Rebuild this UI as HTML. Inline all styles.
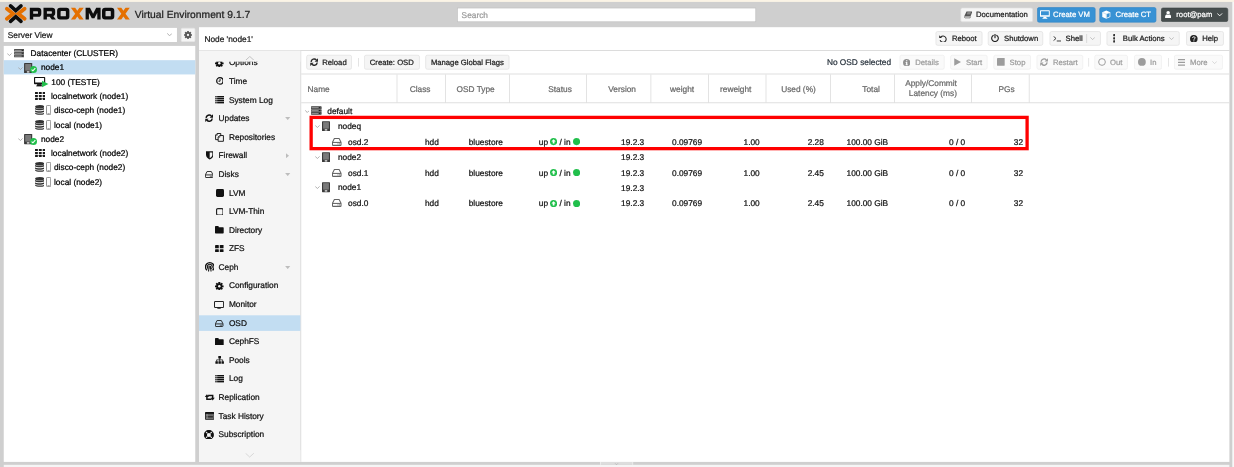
<!DOCTYPE html>
<html><head><meta charset="utf-8"><title>node1 - Proxmox Virtual Environment</title>
<style>
html,body{margin:0;padding:0;}
body{width:1234px;height:467px;overflow:hidden;position:relative;background:#cfcfcf;font-family:"Liberation Sans",sans-serif;}
.a{position:absolute;display:block;}
.t{white-space:nowrap;text-rendering:geometricPrecision;-webkit-text-stroke:0.22px currentColor;}
#root{position:absolute;left:0;top:0;width:1234px;height:467px;will-change:transform;}
</style></head><body><div id="root">
<svg class="a" style="left:0px;top:0px;" width="1234" height="2"><rect x="0.00" y="0.00" width="1234.00" height="1.90" rx="0" fill="#fbf4e6"/></svg>
<svg class="a" style="left:1232px;top:1px;" width="2" height="466"><rect x="0.30" y="0.90" width="1.70" height="465.10" rx="0" fill="#f8f8f8"/></svg>
<svg class="a" style="left:3px;top:464px;" width="1227" height="3"><rect x="0.75" y="0.80" width="1225.60" height="2.20" rx="0" fill="#f5f5f5"/></svg>
<svg class="a" style="left:600px;top:461px;" width="33" height="4"><rect x="0.60" y="0.90" width="32.00" height="2.90" rx="0" fill="#dddddd"/></svg>
<svg class="a" style="left:600px;top:461px;" width="1" height="4"><rect x="0.00" y="0.90" width="1.00" height="2.90" rx="0" fill="#ececec"/></svg>
<svg class="a" style="left:632px;top:461px;" width="2" height="4"><rect x="0.20" y="0.90" width="1.00" height="2.90" rx="0" fill="#ececec"/></svg>
<svg class="a" style="left:614.30px;top:462.50px;" width="5.00" height="2.00" viewBox="0 0 10 6"><path d="M0.5 0.7 L5 5.2 L9.5 0.7" fill="none" stroke="#a0a0a0" stroke-width="1.40"/></svg>
<svg class="a" style="left:0.00px;top:0.00px;" width="134.00" height="28.00" viewBox="0 0 134 28"><path d="M6.9 8.7 L13.2 13.75 L6.9 18.8" fill="none" stroke="#e57000" stroke-width="3.8" stroke-linecap="round" stroke-linejoin="miter"/><path d="M24.6 8.7 L18.3 13.75 L24.6 18.8" fill="none" stroke="#e57000" stroke-width="3.8" stroke-linecap="round" stroke-linejoin="miter"/><path d="M10.5 5.9 L15.75 10.6 L21.0 5.9" fill="none" stroke="#0d0d0d" stroke-width="3.6" stroke-linecap="round" stroke-linejoin="miter"/><path d="M10.5 21.4 L15.75 16.7 L21.0 21.4" fill="none" stroke="#0d0d0d" stroke-width="3.6" stroke-linecap="round" stroke-linejoin="miter"/><path d="M0 0 H8.4 Q11.5 0 11.5 3.1 V5.8 Q11.5 8.9 8.4 8.9 H3.4 V11.6 H0 Z M3.4 3.3 V5.9 H7.6 Q8.2 5.9 8.2 5.3 V3.9 Q8.2 3.3 7.6 3.3 Z" fill="#0d0d0d" fill-rule="evenodd" transform="translate(29.8,7.85)"/><path d="M0 0 H8.6 Q11.7 0 11.7 3.1 V5.4 Q11.7 7.9 9.9 8.4 L12.4 11.6 H8.3 L6.2 8.8 H3.4 V11.6 H0 Z M3.4 3.3 V5.8 H7.8 Q8.4 5.8 8.4 5.2 V3.9 Q8.4 3.3 7.8 3.3 Z" fill="#0d0d0d" fill-rule="evenodd" transform="translate(43.5,7.85)"/><path d="M3 0 H9.3 Q12.3 0 12.3 3 V8.6 Q12.3 11.6 9.3 11.6 H3 Q0 11.6 0 8.6 V3 Q0 0 3 0 Z M4.1 3.2 Q3.5 3.2 3.5 3.8 V7.9 Q3.5 8.5 4.1 8.5 H8.2 Q8.8 8.5 8.8 7.9 V3.8 Q8.8 3.2 8.2 3.2 Z" fill="#0d0d0d" fill-rule="evenodd" transform="translate(57.1,7.85)"/><path d="M0 0 H4.3 L6.4 3.0 L8.5 0 H12.8 L8.5 5.8 L12.8 11.6 H8.5 L6.4 8.6 L4.3 11.6 H0 L4.3 5.8 Z" fill="#e57000" fill-rule="evenodd" transform="translate(70.9,7.85)"/><path d="M0 11.6 V0 H4.4 L7.5 6.0 L10.6 0 H15 V11.6 H11.7 V5.0 L8.8 10.4 H6.2 L3.3 5.0 V11.6 Z" fill="#0d0d0d" fill-rule="evenodd" transform="translate(85.6,7.85)"/><path d="M3 0 H9.3 Q12.3 0 12.3 3 V8.6 Q12.3 11.6 9.3 11.6 H3 Q0 11.6 0 8.6 V3 Q0 0 3 0 Z M4.1 3.2 Q3.5 3.2 3.5 3.8 V7.9 Q3.5 8.5 4.1 8.5 H8.2 Q8.8 8.5 8.8 7.9 V3.8 Q8.8 3.2 8.2 3.2 Z" fill="#0d0d0d" fill-rule="evenodd" transform="translate(102.0,7.85)"/><path d="M0 0 H4.3 L6.4 3.0 L8.5 0 H12.8 L8.5 5.8 L12.8 11.6 H8.5 L6.4 8.6 L4.3 11.6 H0 L4.3 5.8 Z" fill="#e57000" fill-rule="evenodd" transform="translate(117.0,7.85)"/></svg>
<div class="a t" style="top:9px;font-size:10.3px;line-height:14px;height:14px;color:#1c1c1c;left:134.80px;">Virtual Environment 9.1.7</div>
<svg class="a" style="left:457px;top:7px;" width="300" height="16"><rect x="0.52" y="1.03" width="298.25" height="13.75" rx="0.00" fill="#ffffff" stroke="#c0c0c0" stroke-width="0.65"/></svg>
<div class="a t" style="top:9px;font-size:8.32px;line-height:12px;height:12px;color:#9a9a9a;left:461.60px;">Search</div>
<svg class="a" style="left:960px;top:7px;" width="74" height="16"><rect x="0.72" y="0.92" width="72.05" height="13.95" rx="1.68" fill="#f5f5f5" stroke="#dcdcdc" stroke-width="0.65"/></svg>
<svg class="a" style="left:963.50px;top:10.90px;" width="8.60" height="7.70" viewBox="0 0 22 18"><path d="M6.4 0.6 H21.4 L16.6 13.4 H2.4 Q0.4 13.4 1.2 11.4 Z" fill="#555"/><path d="M1.6 13.2 Q0.4 16.8 3.4 16.8 H15.6 L16.8 13.6" fill="none" stroke="#555" stroke-width="1.7"/><path d="M8.6 3.6 H17.4 M7.6 6.4 H16.4" stroke="#f5f5f5" stroke-width="1"/></svg>
<div class="a t" style="top:9px;font-size:7.7px;line-height:12px;height:12px;color:#1a1a1a;left:976.00px;">Documentation</div>
<svg class="a" style="left:1037px;top:7px;" width="59" height="16"><rect x="0.42" y="0.52" width="57.75" height="14.65" rx="1.68" fill="#3892d4" stroke="#3487c6" stroke-width="0.65"/></svg>
<svg class="a" style="left:1040.20px;top:10.00px;" width="9.80" height="9.00" viewBox="0 0 22 19"><path d="M1.6 0 H20.4 A1.6 1.6 0 0 1 22 1.6 V13.2 A1.6 1.6 0 0 1 20.4 14.8 H1.6 A1.6 1.6 0 0 1 0 13.2 V1.6 A1.6 1.6 0 0 1 1.6 0 Z M2.2 2.2 V11.2 H19.8 V2.2 Z" fill="#fff" fill-rule="evenodd"/><path d="M8 14.6 H14 L14.8 17.4 H16.4 V19 H5.6 V17.4 H7.2 Z" fill="#fff"/></svg>
<div class="a t" style="top:9px;font-size:7.7px;line-height:12px;height:12px;color:#ffffff;left:1053.10px;">Create VM</div>
<svg class="a" style="left:1099px;top:7px;" width="58" height="16"><rect x="0.73" y="0.52" width="56.25" height="14.65" rx="1.68" fill="#3892d4" stroke="#3487c6" stroke-width="0.65"/></svg>
<svg class="a" style="left:1102.20px;top:10.20px;" width="8.60" height="9.20" viewBox="0 0 20 20"><path d="M10 0.4 L19.4 4.4 V15.4 L10 19.8 L0.6 15.4 V4.4 Z" fill="#fff"/><path d="M11.2 9.4 L17.8 6.5 V14.4 L11.2 17.6 Z" fill="#3892d4"/><path d="M2.4 5.6 L10 8.8 L17.6 5.6" fill="none" stroke="#3892d4" stroke-width="0.9" opacity="0.7"/><path d="M10 8.8 V18.6" fill="none" stroke="#3892d4" stroke-width="0.9" opacity="0.7"/></svg>
<div class="a t" style="top:9px;font-size:7.7px;line-height:12px;height:12px;color:#ffffff;left:1115.60px;">Create CT</div>
<svg class="a" style="left:1161px;top:7px;" width="68" height="15"><rect x="0.33" y="1.02" width="66.45" height="13.55" rx="1.68" fill="#464d4d" stroke="#3d4444" stroke-width="0.65"/></svg>
<svg class="a" style="left:1165.00px;top:10.90px;" width="6.30" height="7.40" viewBox="0 0 16 19.4"><circle cx="8" cy="4.6" r="4.6" fill="#fff"/><path d="M0 18 V15 C0 11 3 9.4 5 9.4 C6.4 10.6 9.6 10.6 11 9.4 C13 9.4 16 11 16 15 V18 A1.6 1.6 0 0 1 14.4 19.4 H1.6 A1.6 1.6 0 0 1 0 18 Z" fill="#fff"/></svg>
<div class="a t" style="top:9px;font-size:7.7px;line-height:12px;height:12px;color:#ffffff;left:1176.30px;">root@pam</div>
<svg class="a" style="left:1217.40px;top:13.30px;" width="5.40" height="3.30" viewBox="0 0 10 6"><path d="M0.5 0.7 L5 5.2 L9.5 0.7" fill="none" stroke="#f0f0f0" stroke-width="1.85"/></svg>
<svg class="a" style="left:3px;top:27px;" width="174" height="15"><rect x="0.75" y="0.90" width="173.20" height="14.10" rx="0" fill="#ffffff"/></svg>
<div class="a t" style="top:29px;font-size:8.32px;line-height:12px;height:12px;color:#1a1a1a;left:7.80px;">Server View</div>
<svg class="a" style="left:166.90px;top:32.90px;" width="5.20" height="3.30" viewBox="0 0 10 6"><path d="M0.5 0.7 L5 5.2 L9.5 0.7" fill="none" stroke="#9a9a9a" stroke-width="1.54"/></svg>
<svg class="a" style="left:180px;top:27px;" width="16" height="15"><rect x="1.23" y="1.13" width="13.75" height="13.55" rx="1.18" fill="#f5f5f5" stroke="#e2e2e2" stroke-width="0.65"/></svg>
<svg class="a" style="left:184.10px;top:30.90px;" width="8.00" height="8.00" viewBox="0 0 20 20"><rect x="7.9" y="0" width="4.2" height="5" rx="0.4" transform="rotate(0 10 10)" fill="#555"/><rect x="7.9" y="0" width="4.2" height="5" rx="0.4" transform="rotate(45 10 10)" fill="#555"/><rect x="7.9" y="0" width="4.2" height="5" rx="0.4" transform="rotate(90 10 10)" fill="#555"/><rect x="7.9" y="0" width="4.2" height="5" rx="0.4" transform="rotate(135 10 10)" fill="#555"/><rect x="7.9" y="0" width="4.2" height="5" rx="0.4" transform="rotate(180 10 10)" fill="#555"/><rect x="7.9" y="0" width="4.2" height="5" rx="0.4" transform="rotate(225 10 10)" fill="#555"/><rect x="7.9" y="0" width="4.2" height="5" rx="0.4" transform="rotate(270 10 10)" fill="#555"/><rect x="7.9" y="0" width="4.2" height="5" rx="0.4" transform="rotate(315 10 10)" fill="#555"/><circle cx="10" cy="10" r="7.2" fill="#555"/><circle cx="10" cy="10" r="2.9" fill="#f5f5f5"/></svg>
<svg class="a" style="left:3px;top:45px;" width="193" height="417"><rect x="0.75" y="0.90" width="191.50" height="416.00" rx="0" fill="#ffffff"/></svg>
<svg class="a" style="left:3px;top:60px;" width="193" height="15"><rect x="0.75" y="0.17" width="191.50" height="14.27" rx="0" fill="#c2ddf2"/></svg>
<svg class="a" style="left:7.20px;top:52.70px;" width="4.80" height="3.10" viewBox="0 0 10 6"><path d="M0.5 0.7 L5 5.2 L9.5 0.7" fill="none" stroke="#a8a8a8" stroke-width="1.88"/></svg>
<svg class="a" style="left:13.90px;top:49.30px;" width="10.60" height="8.40" viewBox="0 0 20 16"><rect x="0" y="0.2" width="20" height="4.8" rx="1" fill="#3c3c3c"/><rect x="0.8" y="1.4" width="18.4" height="2.6" fill="#8a8a8a"/><rect x="14.5" y="1.7" width="3.6" height="1.9" fill="#1a1a1a"/><rect x="0" y="5.6000000000000005" width="20" height="4.8" rx="1" fill="#3c3c3c"/><rect x="0.8" y="6.800000000000001" width="18.4" height="2.6" fill="#8a8a8a"/><rect x="14.5" y="7.1000000000000005" width="3.6" height="1.9" fill="#1a1a1a"/><rect x="0" y="11.0" width="20" height="4.8" rx="1" fill="#3c3c3c"/><rect x="0.8" y="12.2" width="18.4" height="2.6" fill="#8a8a8a"/><rect x="14.5" y="12.5" width="3.6" height="1.9" fill="#1a1a1a"/></svg>
<div class="a t" style="top:47px;font-size:8.32px;line-height:12px;height:12px;color:#000;left:30.60px;">Datacenter (CLUSTER)</div>
<svg class="a" style="left:17.80px;top:66.97px;" width="4.80" height="3.10" viewBox="0 0 10 6"><path d="M0.5 0.7 L5 5.2 L9.5 0.7" fill="none" stroke="#a8a8a8" stroke-width="1.88"/></svg>
<svg class="a" style="left:24.40px;top:63.07px;" width="8.30" height="10.20" viewBox="0 0 16 20"><rect x="0" y="0" width="16" height="20" rx="1.2" fill="#3a3a3a"/><rect x="2.2" y="2" width="11.6" height="13" fill="#7a7a7a"/><rect x="5.5" y="16.2" width="5" height="2.6" fill="#e8e8e8"/></svg>
<svg class="a" style="left:30.10px;top:66.37px;" width="7.00" height="7.00" viewBox="0 0 20 20"><circle cx="10" cy="10" r="10" fill="#21bf4b"/><path d="M4.6 10.2 L8.4 13.8 L15.2 6.4" fill="none" stroke="#fff" stroke-width="3.1"/></svg>
<div class="a t" style="top:61px;font-size:8.32px;line-height:12px;height:12px;color:#000;left:40.90px;">node1</div>
<svg class="a" style="left:34.40px;top:77.34px;overflow:visible;" width="14.25" height="10.16" viewBox="0 0 28 20"><path d="M1.5 0 H20.5 A1.5 1.5 0 0 1 22 1.5 V13 A1.5 1.5 0 0 1 20.5 14.5 H1.5 A1.5 1.5 0 0 1 0 13 V1.5 A1.5 1.5 0 0 1 1.5 0 Z M2.2 2.2 V11 H19.8 V2.2 Z" fill="#111" fill-rule="evenodd"/><rect x="6" y="14" width="9" height="3.6" fill="#111"/><rect x="4.5" y="16.6" width="11" height="1.9" fill="#111"/><path d="M15.8 7.2 L28.4 13.8 L15.8 20.4 Z" fill="#21bf4b"/></svg>
<div class="a t" style="top:76px;font-size:8.32px;line-height:12px;height:12px;color:#000;left:51.30px;">100 (TESTE)</div>
<svg class="a" style="left:34.60px;top:92.11px;" width="10.60" height="7.90" viewBox="0 0 20.4 15.2"><rect x="0.0" y="0.0" width="5.6" height="4" rx="0.7" fill="#1a1a1a"/><rect x="7.4" y="0.0" width="5.6" height="4" rx="0.7" fill="#1a1a1a"/><rect x="14.8" y="0.0" width="5.6" height="4" rx="0.7" fill="#1a1a1a"/><rect x="0.0" y="5.6" width="5.6" height="4" rx="0.7" fill="#1a1a1a"/><rect x="7.4" y="5.6" width="5.6" height="4" rx="0.7" fill="#1a1a1a"/><rect x="14.8" y="5.6" width="5.6" height="4" rx="0.7" fill="#1a1a1a"/><rect x="0.0" y="11.2" width="5.6" height="4" rx="0.7" fill="#1a1a1a"/><rect x="7.4" y="11.2" width="5.6" height="4" rx="0.7" fill="#1a1a1a"/><rect x="14.8" y="11.2" width="5.6" height="4" rx="0.7" fill="#1a1a1a"/></svg>
<div class="a t" style="top:90px;font-size:8.32px;line-height:12px;height:12px;color:#000;left:51.00px;">localnetwork (node1)</div>
<svg class="a" style="left:35.00px;top:105.28px;" width="9.40" height="10.00" viewBox="0 0 18 19.5"><ellipse cx="9" cy="3.2" rx="9" ry="3.2" fill="#333"/><path d="M0 5.2 C1.5 7.6 16.5 7.6 18 5.2 V8.2 C16.5 11 1.5 11 0 8.2 Z" fill="#333"/><path d="M0 10 C1.5 12.6 16.5 12.6 18 10 V13 C16.5 15.8 1.5 15.8 0 13 Z" fill="#333"/><path d="M0 14.8 C1.5 17.4 16.5 17.4 18 14.8 V16.6 C16.5 20 1.5 20 0 16.6 Z" fill="#333"/></svg>
<svg class="a" style="left:46.30px;top:105.28px;" width="5.20" height="10.00" viewBox="0 0 10 20"><rect x="0.8" y="0.8" width="8.4" height="18.4" rx="1.8" fill="#fdfdfd" stroke="#6a6a6a" stroke-width="1.5"/><rect x="2.8" y="16.0" width="4.4" height="1.4" fill="#8a8a8a"/></svg>
<div class="a t" style="top:104px;font-size:8.32px;line-height:12px;height:12px;color:#000;left:54.00px;">disco-ceph (node1)</div>
<svg class="a" style="left:35.00px;top:119.55px;" width="9.40" height="10.00" viewBox="0 0 18 19.5"><ellipse cx="9" cy="3.2" rx="9" ry="3.2" fill="#333"/><path d="M0 5.2 C1.5 7.6 16.5 7.6 18 5.2 V8.2 C16.5 11 1.5 11 0 8.2 Z" fill="#333"/><path d="M0 10 C1.5 12.6 16.5 12.6 18 10 V13 C16.5 15.8 1.5 15.8 0 13 Z" fill="#333"/><path d="M0 14.8 C1.5 17.4 16.5 17.4 18 14.8 V16.6 C16.5 20 1.5 20 0 16.6 Z" fill="#333"/></svg>
<svg class="a" style="left:46.30px;top:119.55px;" width="5.20" height="10.00" viewBox="0 0 10 20"><rect x="0.8" y="0.8" width="8.4" height="18.4" rx="1.8" fill="#fdfdfd" stroke="#6a6a6a" stroke-width="1.5"/><rect x="2.8" y="16.0" width="4.4" height="1.4" fill="#8a8a8a"/></svg>
<div class="a t" style="top:119px;font-size:8.32px;line-height:12px;height:12px;color:#000;left:54.00px;">local (node1)</div>
<svg class="a" style="left:17.80px;top:138.32px;" width="4.80" height="3.10" viewBox="0 0 10 6"><path d="M0.5 0.7 L5 5.2 L9.5 0.7" fill="none" stroke="#a8a8a8" stroke-width="1.88"/></svg>
<svg class="a" style="left:24.40px;top:134.42px;" width="8.30" height="10.20" viewBox="0 0 16 20"><rect x="0" y="0" width="16" height="20" rx="1.2" fill="#3a3a3a"/><rect x="2.2" y="2" width="11.6" height="13" fill="#7a7a7a"/><rect x="5.5" y="16.2" width="5" height="2.6" fill="#e8e8e8"/></svg>
<svg class="a" style="left:30.10px;top:137.72px;" width="7.00" height="7.00" viewBox="0 0 20 20"><circle cx="10" cy="10" r="10" fill="#21bf4b"/><path d="M4.6 10.2 L8.4 13.8 L15.2 6.4" fill="none" stroke="#fff" stroke-width="3.1"/></svg>
<div class="a t" style="top:133px;font-size:8.32px;line-height:12px;height:12px;color:#000;left:40.90px;">node2</div>
<svg class="a" style="left:34.60px;top:149.19px;" width="10.60" height="7.90" viewBox="0 0 20.4 15.2"><rect x="0.0" y="0.0" width="5.6" height="4" rx="0.7" fill="#1a1a1a"/><rect x="7.4" y="0.0" width="5.6" height="4" rx="0.7" fill="#1a1a1a"/><rect x="14.8" y="0.0" width="5.6" height="4" rx="0.7" fill="#1a1a1a"/><rect x="0.0" y="5.6" width="5.6" height="4" rx="0.7" fill="#1a1a1a"/><rect x="7.4" y="5.6" width="5.6" height="4" rx="0.7" fill="#1a1a1a"/><rect x="14.8" y="5.6" width="5.6" height="4" rx="0.7" fill="#1a1a1a"/><rect x="0.0" y="11.2" width="5.6" height="4" rx="0.7" fill="#1a1a1a"/><rect x="7.4" y="11.2" width="5.6" height="4" rx="0.7" fill="#1a1a1a"/><rect x="14.8" y="11.2" width="5.6" height="4" rx="0.7" fill="#1a1a1a"/></svg>
<div class="a t" style="top:147px;font-size:8.32px;line-height:12px;height:12px;color:#000;left:51.00px;">localnetwork (node2)</div>
<svg class="a" style="left:35.00px;top:162.36px;" width="9.40" height="10.00" viewBox="0 0 18 19.5"><ellipse cx="9" cy="3.2" rx="9" ry="3.2" fill="#333"/><path d="M0 5.2 C1.5 7.6 16.5 7.6 18 5.2 V8.2 C16.5 11 1.5 11 0 8.2 Z" fill="#333"/><path d="M0 10 C1.5 12.6 16.5 12.6 18 10 V13 C16.5 15.8 1.5 15.8 0 13 Z" fill="#333"/><path d="M0 14.8 C1.5 17.4 16.5 17.4 18 14.8 V16.6 C16.5 20 1.5 20 0 16.6 Z" fill="#333"/></svg>
<svg class="a" style="left:46.30px;top:162.36px;" width="5.20" height="10.00" viewBox="0 0 10 20"><rect x="0.8" y="0.8" width="8.4" height="18.4" rx="1.8" fill="#fdfdfd" stroke="#6a6a6a" stroke-width="1.5"/><rect x="2.8" y="16.0" width="4.4" height="1.4" fill="#8a8a8a"/></svg>
<div class="a t" style="top:161px;font-size:8.32px;line-height:12px;height:12px;color:#000;left:54.00px;">disco-ceph (node2)</div>
<svg class="a" style="left:35.00px;top:176.63px;" width="9.40" height="10.00" viewBox="0 0 18 19.5"><ellipse cx="9" cy="3.2" rx="9" ry="3.2" fill="#333"/><path d="M0 5.2 C1.5 7.6 16.5 7.6 18 5.2 V8.2 C16.5 11 1.5 11 0 8.2 Z" fill="#333"/><path d="M0 10 C1.5 12.6 16.5 12.6 18 10 V13 C16.5 15.8 1.5 15.8 0 13 Z" fill="#333"/><path d="M0 14.8 C1.5 17.4 16.5 17.4 18 14.8 V16.6 C16.5 20 1.5 20 0 16.6 Z" fill="#333"/></svg>
<svg class="a" style="left:46.30px;top:176.63px;" width="5.20" height="10.00" viewBox="0 0 10 20"><rect x="0.8" y="0.8" width="8.4" height="18.4" rx="1.8" fill="#fdfdfd" stroke="#6a6a6a" stroke-width="1.5"/><rect x="2.8" y="16.0" width="4.4" height="1.4" fill="#8a8a8a"/></svg>
<div class="a t" style="top:176px;font-size:8.32px;line-height:12px;height:12px;color:#000;left:54.00px;">local (node2)</div>
<svg class="a" style="left:199px;top:27px;" width="1031" height="435"><rect x="0.00" y="0.20" width="1030.40" height="434.70" rx="0" fill="#ffffff"/></svg>
<div class="a t" style="top:33px;font-size:8.32px;line-height:12px;height:12px;color:#1a1a1a;left:204.40px;">Node 'node1'</div>
<svg class="a" style="left:199px;top:50px;" width="1031" height="1"><rect x="0.00" y="0.00" width="1030.40" height="0.80" rx="0" fill="#d4d4d4"/></svg>
<svg class="a" style="left:935px;top:31px;" width="48" height="15"><rect x="0.93" y="0.52" width="46.15" height="13.85" rx="1.68" fill="#f5f5f5" stroke="#dedede" stroke-width="0.65"/></svg>
<svg class="a" style="left:939.40px;top:34.50px;" width="7.80" height="7.80" viewBox="0 0 20 20"><path d="M4.6 5.4 A7.9 7.9 0 1 1 2.9 13.2" fill="none" stroke="#222" stroke-width="2.6"/><path d="M0.6 0.8 V7.8 H7.6 Z" fill="#222"/></svg>
<div class="a t" style="top:33px;font-size:7.7px;line-height:12px;height:12px;color:#1a1a1a;left:951.90px;">Reboot</div>
<svg class="a" style="left:987px;top:31px;" width="57" height="15"><rect x="1.22" y="0.52" width="54.55" height="13.85" rx="1.68" fill="#f5f5f5" stroke="#dedede" stroke-width="0.65"/></svg>
<svg class="a" style="left:991.40px;top:34.30px;" width="8.00" height="8.00" viewBox="0 0 20 20"><path d="M5.4 3.6 A8.3 8.3 0 1 0 14.6 3.6" fill="none" stroke="#222" stroke-width="2.9" stroke-linecap="round"/><path d="M10 1 V9.4" stroke="#222" stroke-width="2.9" stroke-linecap="round"/></svg>
<div class="a t" style="top:33px;font-size:7.7px;line-height:12px;height:12px;color:#1a1a1a;left:1004.00px;">Shutdown</div>
<svg class="a" style="left:1049px;top:31px;" width="52" height="15"><rect x="0.92" y="0.52" width="50.55" height="13.85" rx="1.68" fill="#f5f5f5" stroke="#dedede" stroke-width="0.65"/></svg>
<svg class="a" style="left:1052.50px;top:36.00px;" width="8.60" height="5.60" viewBox="0 0 22 15"><path d="M1 1 L7.6 6.6 L1 12.2" fill="none" stroke="#333" stroke-width="2.5"/><path d="M9.6 13.4 H21.4" stroke="#333" stroke-width="2.5"/></svg>
<div class="a t" style="top:33px;font-size:7.7px;line-height:12px;height:12px;color:#1a1a1a;left:1065.60px;">Shell</div>
<svg class="a" style="left:1086px;top:34px;" width="2" height="9"><rect x="0.40" y="0.00" width="0.70" height="9.00" rx="0" fill="#d0d0d0"/></svg>
<svg class="a" style="left:1090.20px;top:37.00px;" width="5.20" height="3.00" viewBox="0 0 10 6"><path d="M0.5 0.7 L5 5.2 L9.5 0.7" fill="none" stroke="#a8a8a8" stroke-width="1.35"/></svg>
<svg class="a" style="left:1106px;top:31px;" width="74" height="15"><rect x="0.92" y="0.52" width="72.35" height="13.85" rx="1.68" fill="#f5f5f5" stroke="#dedede" stroke-width="0.65"/></svg>
<svg class="a" style="left:1112.80px;top:34.20px;" width="2.60" height="8.60" viewBox="0 0 5.2 20"><rect x="0" y="0.0" width="5.2" height="5.2" rx="1" fill="#333"/><rect x="0" y="7.4" width="5.2" height="5.2" rx="1" fill="#333"/><rect x="0" y="14.8" width="5.2" height="5.2" rx="1" fill="#333"/></svg>
<div class="a t" style="top:33px;font-size:7.7px;line-height:12px;height:12px;color:#1a1a1a;left:1122.80px;">Bulk Actions</div>
<svg class="a" style="left:1169.00px;top:37.00px;" width="5.00" height="3.00" viewBox="0 0 10 6"><path d="M0.5 0.7 L5 5.2 L9.5 0.7" fill="none" stroke="#a8a8a8" stroke-width="1.40"/></svg>
<svg class="a" style="left:1186px;top:31px;" width="38" height="15"><rect x="0.53" y="0.52" width="36.95" height="13.85" rx="1.68" fill="#f5f5f5" stroke="#dedede" stroke-width="0.65"/></svg>
<svg class="a" style="left:1190.00px;top:34.60px;" width="7.60" height="7.60" viewBox="0 0 20 20"><circle cx="10" cy="10" r="10" fill="#222"/><path d="M6.6 7.6 C6.6 3.6 13.6 3.6 13.6 7.6 C13.6 10 10.2 10 10.2 12.6" fill="none" stroke="#f5f5f5" stroke-width="2.5"/><rect x="8.8" y="14.2" width="2.8" height="2.6" fill="#f5f5f5"/></svg>
<div class="a t" style="top:33px;font-size:7.7px;line-height:12px;height:12px;color:#1a1a1a;left:1202.30px;">Help</div>
<svg class="a" style="left:199px;top:50px;" width="102" height="412"><rect x="0.00" y="0.80" width="101.60" height="411.10" rx="0" fill="#f5f5f5"/></svg>
<svg class="a" style="left:300px;top:50px;" width="2" height="412"><rect x="0.40" y="0.80" width="0.80" height="411.10" rx="0" fill="#d4d4d4"/></svg>
<svg class="a" style="left:199px;top:315px;" width="102" height="16"><rect x="0.00" y="0.30" width="101.40" height="15.60" rx="0" fill="#c2ddf2"/></svg>
<div class="a t" style="top:56px;font-size:8.32px;line-height:12px;height:12px;color:#111;left:228.90px;">Options</div>
<svg class="a" style="left:215.30px;top:58.50px;" width="8.60" height="8.60" viewBox="0 0 20 20"><rect x="7.9" y="0" width="4.2" height="5" rx="0.4" transform="rotate(0 10 10)" fill="#111"/><rect x="7.9" y="0" width="4.2" height="5" rx="0.4" transform="rotate(45 10 10)" fill="#111"/><rect x="7.9" y="0" width="4.2" height="5" rx="0.4" transform="rotate(90 10 10)" fill="#111"/><rect x="7.9" y="0" width="4.2" height="5" rx="0.4" transform="rotate(135 10 10)" fill="#111"/><rect x="7.9" y="0" width="4.2" height="5" rx="0.4" transform="rotate(180 10 10)" fill="#111"/><rect x="7.9" y="0" width="4.2" height="5" rx="0.4" transform="rotate(225 10 10)" fill="#111"/><rect x="7.9" y="0" width="4.2" height="5" rx="0.4" transform="rotate(270 10 10)" fill="#111"/><rect x="7.9" y="0" width="4.2" height="5" rx="0.4" transform="rotate(315 10 10)" fill="#111"/><circle cx="10" cy="10" r="7.2" fill="#111"/><circle cx="10" cy="10" r="2.9" fill="#f5f5f5"/></svg>
<div class="a t" style="top:75px;font-size:8.32px;line-height:12px;height:12px;color:#111;left:228.90px;">Time</div>
<svg class="a" style="left:215.60px;top:77.49px;" width="7.80" height="7.80" viewBox="0 0 20 20"><circle cx="10" cy="10" r="8.2" fill="none" stroke="#111" stroke-width="3.2"/><path d="M10.4 5 V10.8 H6.4" fill="none" stroke="#111" stroke-width="2.4"/></svg>
<div class="a t" style="top:94px;font-size:8.32px;line-height:12px;height:12px;color:#111;left:228.90px;">System Log</div>
<svg class="a" style="left:214.90px;top:96.28px;" width="9.30" height="7.40" viewBox="0 0 20 17"><rect x="0" y="0.00" width="3.2" height="3.35" fill="#111"/><rect x="4.2" y="0.00" width="15.8" height="3.35" fill="#111"/><rect x="0" y="4.55" width="3.2" height="3.35" fill="#111"/><rect x="4.2" y="4.55" width="15.8" height="3.35" fill="#111"/><rect x="0" y="9.10" width="3.2" height="3.35" fill="#111"/><rect x="4.2" y="9.10" width="15.8" height="3.35" fill="#111"/><rect x="0" y="13.65" width="3.2" height="3.35" fill="#111"/><rect x="4.2" y="13.65" width="15.8" height="3.35" fill="#111"/></svg>
<div class="a t" style="top:112px;font-size:8.32px;line-height:12px;height:12px;color:#111;left:218.50px;">Updates</div>
<svg class="a" style="left:205.00px;top:114.47px;" width="8.30" height="8.30" viewBox="0 0 20 20"><path d="M2.6 9.2 A7.4 7.4 0 0 1 15.4 4.8" fill="none" stroke="#111" stroke-width="3.6"/><path d="M19.4 0.6 V8.8 H11.2 Z" fill="#111"/><path d="M17.4 10.8 A7.4 7.4 0 0 1 4.6 15.2" fill="none" stroke="#111" stroke-width="3.6"/><path d="M0.6 19.4 V11.2 H8.8 Z" fill="#111"/></svg>
<svg class="a" style="left:285.30px;top:117.17px;" width="5.40" height="3.10" viewBox="0 0 10 6"><path d="M0 0 H10 L5 6 Z" fill="#bdbdbd"/></svg>
<div class="a t" style="top:131px;font-size:8.32px;line-height:12px;height:12px;color:#111;left:228.90px;">Repositories</div>
<svg class="a" style="left:215.00px;top:133.16px;" width="9.00" height="8.80" viewBox="0 0 18 18"><path d="M11.6 5 V1 H4.2 L1 4.2 V13.6 H6.2" fill="none" stroke="#111" stroke-width="1.9" stroke-linejoin="round"/><path d="M4.5 1.3 V4.5 H1.3" fill="none" stroke="#111" stroke-width="1.3"/><path d="M6.2 8.4 L9.4 5.2 H17 V17 H6.2 Z" fill="none" stroke="#111" stroke-width="1.9" stroke-linejoin="round"/><path d="M9.7 5.5 V8.7 H6.5" fill="none" stroke="#111" stroke-width="1.3"/></svg>
<div class="a t" style="top:149px;font-size:8.32px;line-height:12px;height:12px;color:#111;left:218.50px;">Firewall</div>
<svg class="a" style="left:205.60px;top:151.45px;" width="7.40" height="8.60" viewBox="0 0 18 20"><path d="M0 0.4 H18 V9.5 C18 14.8 12.8 18.4 9 20 C5.2 18.4 0 14.8 0 9.5 Z" fill="#111"/><path d="M9 3 H15.4 V9.5 C15.4 12.8 12.2 15.6 9 17.2 Z" fill="#f5f5f5"/></svg>
<svg class="a" style="left:286.30px;top:153.05px;" width="3.00" height="5.40" viewBox="0 0 6 10"><path d="M0 0 V10 L6 5 Z" fill="#bdbdbd"/></svg>
<div class="a t" style="top:168px;font-size:8.32px;line-height:12px;height:12px;color:#111;left:218.50px;">Disks</div>
<svg class="a" style="left:204.90px;top:170.74px;" width="8.40" height="7.00" viewBox="0 0 20 16.4"><path d="M5 1 H15 L19 8.8 V14 A1.4 1.4 0 0 1 17.6 15.4 H2.4 A1.4 1.4 0 0 1 1 14 V8.8 Z" fill="none" stroke="#222" stroke-width="2.2" stroke-linejoin="round"/><path d="M1.2 9.2 H18.8" stroke="#222" stroke-width="2.2" fill="none"/><rect x="11.6" y="11.4" width="2" height="1.9" fill="#222"/><rect x="14.8" y="11.4" width="2" height="1.9" fill="#222"/></svg>
<svg class="a" style="left:285.30px;top:172.94px;" width="5.40" height="3.10" viewBox="0 0 10 6"><path d="M0 0 H10 L5 6 Z" fill="#bdbdbd"/></svg>
<div class="a t" style="top:187px;font-size:8.32px;line-height:12px;height:12px;color:#111;left:228.90px;">LVM</div>
<svg class="a" style="left:215.50px;top:189.13px;" width="8.00" height="8.00" viewBox="0 0 20 20"><rect x="0" y="0" width="20" height="20" rx="3.6" fill="#111"/></svg>
<div class="a t" style="top:205px;font-size:8.32px;line-height:12px;height:12px;color:#111;left:228.90px;">LVM-Thin</div>
<svg class="a" style="left:215.70px;top:207.82px;" width="7.60" height="7.60" viewBox="0 0 20 20"><rect x="1.5" y="1.5" width="17" height="17" rx="3.4" fill="none" stroke="#222" stroke-width="3"/></svg>
<div class="a t" style="top:224px;font-size:8.32px;line-height:12px;height:12px;color:#111;left:228.90px;">Directory</div>
<svg class="a" style="left:215.30px;top:226.41px;" width="8.70" height="7.50" viewBox="0 0 20 16.8"><path d="M1.6 0 H7 A1.6 1.6 0 0 1 8.6 1.6 V2.4 H18.4 A1.6 1.6 0 0 1 20 4 V15.2 A1.6 1.6 0 0 1 18.4 16.8 H1.6 A1.6 1.6 0 0 1 0 15.2 V1.6 A1.6 1.6 0 0 1 1.6 0 Z" fill="#111"/></svg>
<div class="a t" style="top:242px;font-size:8.32px;line-height:12px;height:12px;color:#111;left:228.90px;">ZFS</div>
<svg class="a" style="left:215.30px;top:244.90px;" width="8.60" height="7.60" viewBox="0 0 20 18"><rect x="0.0" y="0.0" width="8.8" height="7.9" rx="1" fill="#111"/><rect x="11.2" y="0.0" width="8.8" height="7.9" rx="1" fill="#111"/><rect x="0.0" y="10.1" width="8.8" height="7.9" rx="1" fill="#111"/><rect x="11.2" y="10.1" width="8.8" height="7.9" rx="1" fill="#111"/></svg>
<div class="a t" style="top:261px;font-size:8.32px;line-height:12px;height:12px;color:#111;left:218.50px;">Ceph</div>
<svg class="a" style="left:204.50px;top:262.39px;" width="9.60" height="9.60" viewBox="0 0 20 20"><path d="M4.4 17.4 A9 9 0 1 1 15.6 17.4" fill="none" stroke="#111" stroke-width="2.7"/><path d="M6.8 14.0 A5.2 5.2 0 1 1 13.2 14.0" fill="none" stroke="#111" stroke-width="2.3"/><path d="M7.4 19.6 C7.4 16.4 8.4 13.8 8.8 12 A2 2 0 1 1 11.2 12 C11.6 13.8 12.6 16.4 12.6 19.6" fill="none" stroke="#111" stroke-width="2.2"/></svg>
<svg class="a" style="left:285.30px;top:265.89px;" width="5.40" height="3.10" viewBox="0 0 10 6"><path d="M0 0 H10 L5 6 Z" fill="#bdbdbd"/></svg>
<div class="a t" style="top:279px;font-size:8.32px;line-height:12px;height:12px;color:#111;left:228.90px;">Configuration</div>
<svg class="a" style="left:215.30px;top:281.58px;" width="8.60" height="8.60" viewBox="0 0 20 20"><rect x="7.9" y="0" width="4.2" height="5" rx="0.4" transform="rotate(0 10 10)" fill="#111"/><rect x="7.9" y="0" width="4.2" height="5" rx="0.4" transform="rotate(45 10 10)" fill="#111"/><rect x="7.9" y="0" width="4.2" height="5" rx="0.4" transform="rotate(90 10 10)" fill="#111"/><rect x="7.9" y="0" width="4.2" height="5" rx="0.4" transform="rotate(135 10 10)" fill="#111"/><rect x="7.9" y="0" width="4.2" height="5" rx="0.4" transform="rotate(180 10 10)" fill="#111"/><rect x="7.9" y="0" width="4.2" height="5" rx="0.4" transform="rotate(225 10 10)" fill="#111"/><rect x="7.9" y="0" width="4.2" height="5" rx="0.4" transform="rotate(270 10 10)" fill="#111"/><rect x="7.9" y="0" width="4.2" height="5" rx="0.4" transform="rotate(315 10 10)" fill="#111"/><circle cx="10" cy="10" r="7.2" fill="#111"/><circle cx="10" cy="10" r="2.9" fill="#f5f5f5"/></svg>
<div class="a t" style="top:298px;font-size:8.32px;line-height:12px;height:12px;color:#111;left:228.90px;">Monitor</div>
<svg class="a" style="left:214.10px;top:300.57px;" width="10.10" height="8.00" viewBox="0 0 22 17.4"><rect x="1.1" y="1.1" width="19.8" height="12.8" rx="1.6" fill="none" stroke="#222" stroke-width="2.2"/><path d="M7 17 H15 L14.2 14.6 H7.8 Z" fill="#222"/></svg>
<div class="a t" style="top:317px;font-size:8.32px;line-height:12px;height:12px;color:#111;left:228.90px;">OSD</div>
<svg class="a" style="left:215.20px;top:319.56px;" width="8.40" height="7.00" viewBox="0 0 20 16.4"><path d="M5 1 H15 L19 8.8 V14 A1.4 1.4 0 0 1 17.6 15.4 H2.4 A1.4 1.4 0 0 1 1 14 V8.8 Z" fill="none" stroke="#222" stroke-width="2.2" stroke-linejoin="round"/><path d="M1.2 9.2 H18.8" stroke="#222" stroke-width="2.2" fill="none"/><rect x="11.6" y="11.4" width="2" height="1.9" fill="#222"/><rect x="14.8" y="11.4" width="2" height="1.9" fill="#222"/></svg>
<div class="a t" style="top:335px;font-size:8.32px;line-height:12px;height:12px;color:#111;left:228.90px;">CephFS</div>
<svg class="a" style="left:215.30px;top:337.95px;" width="8.70" height="7.50" viewBox="0 0 20 16.8"><path d="M1.6 0 H7 A1.6 1.6 0 0 1 8.6 1.6 V2.4 H18.4 A1.6 1.6 0 0 1 20 4 V15.2 A1.6 1.6 0 0 1 18.4 16.8 H1.6 A1.6 1.6 0 0 1 0 15.2 V1.6 A1.6 1.6 0 0 1 1.6 0 Z" fill="#111"/></svg>
<div class="a t" style="top:354px;font-size:8.32px;line-height:12px;height:12px;color:#111;left:228.90px;">Pools</div>
<svg class="a" style="left:214.90px;top:356.34px;" width="9.30" height="7.70" viewBox="0 0 20 18"><rect x="6.8" y="0" width="6.4" height="5.8" rx="0.6" fill="#111"/><rect x="0" y="12.2" width="5.8" height="5.8" rx="0.6" fill="#111"/><rect x="7.1" y="12.2" width="5.8" height="5.8" rx="0.6" fill="#111"/><rect x="14.2" y="12.2" width="5.8" height="5.8" rx="0.6" fill="#111"/><path d="M10 5 V13 M2.9 13 V9 H17.1 V13" fill="none" stroke="#111" stroke-width="1.8"/></svg>
<div class="a t" style="top:372px;font-size:8.32px;line-height:12px;height:12px;color:#111;left:228.90px;">Log</div>
<svg class="a" style="left:214.90px;top:375.13px;" width="9.30" height="7.40" viewBox="0 0 20 17"><rect x="0" y="0.00" width="3.2" height="3.35" fill="#111"/><rect x="4.2" y="0.00" width="15.8" height="3.35" fill="#111"/><rect x="0" y="4.55" width="3.2" height="3.35" fill="#111"/><rect x="4.2" y="4.55" width="15.8" height="3.35" fill="#111"/><rect x="0" y="9.10" width="3.2" height="3.35" fill="#111"/><rect x="4.2" y="9.10" width="15.8" height="3.35" fill="#111"/><rect x="0" y="13.65" width="3.2" height="3.35" fill="#111"/><rect x="4.2" y="13.65" width="15.8" height="3.35" fill="#111"/></svg>
<div class="a t" style="top:391px;font-size:8.32px;line-height:12px;height:12px;color:#111;left:218.50px;">Replication</div>
<svg class="a" style="left:204.60px;top:394.12px;overflow:visible;" width="9.60" height="6.70" viewBox="0 0 20 13"><path d="M4 4 V10.4 H13.6" fill="none" stroke="#111" stroke-width="3.1"/><path d="M-0.4 5.6 L4 -0.2 L8.4 5.6 Z" fill="#111"/><path d="M16 9 V2.6 H6.4" fill="none" stroke="#111" stroke-width="3.1"/><path d="M11.6 7.4 L16 13.2 L20.4 7.4 Z" fill="#111"/></svg>
<div class="a t" style="top:410px;font-size:8.32px;line-height:12px;height:12px;color:#111;left:218.50px;">Task History</div>
<svg class="a" style="left:204.60px;top:412.21px;" width="9.30" height="7.70" viewBox="0 0 22 18"><rect x="0" y="0" width="22" height="18" rx="1.8" fill="#111"/><rect x="1.8" y="4.4" width="18.4" height="11.8" fill="#9a9a9a"/><rect x="3.4" y="6" width="2.4" height="1.8" fill="#111"/><rect x="7.2" y="6" width="11.6" height="1.8" fill="#111"/><rect x="3.4" y="9.4" width="2.4" height="1.8" fill="#111"/><rect x="7.2" y="9.4" width="11.6" height="1.8" fill="#111"/><rect x="3.4" y="12.8" width="2.4" height="1.8" fill="#111"/><rect x="7.2" y="12.8" width="11.6" height="1.8" fill="#111"/></svg>
<div class="a t" style="top:428px;font-size:8.32px;line-height:12px;height:12px;color:#111;left:218.50px;">Subscription</div>
<svg class="a" style="left:204.20px;top:429.70px;" width="9.80" height="9.80" viewBox="0 0 20 20"><circle cx="10" cy="10" r="7.0" fill="none" stroke="#111" stroke-width="5.8"/><path d="M4.0 4.0 L7.0 7.0 M16.0 4.0 L13.0 7.0 M4.0 16.0 L7.0 13.0 M16.0 16.0 L13.0 13.0" stroke="#f5f5f5" stroke-width="2.1"/><circle cx="10" cy="10" r="9.4" fill="none" stroke="#111" stroke-width="1.2"/></svg>
<svg class="a" style="left:199px;top:50px;" width="102" height="12"><rect x="0.00" y="0.80" width="101.40" height="10.90" rx="0" fill="#f5f5f5"/></svg>
<svg class="a" style="left:245.40px;top:55.70px;" width="9.60" height="4.70" viewBox="0 0 10 5"><path d="M0.3 4.8 L5 0.5 L9.7 4.8" fill="none" stroke="#b4b4b4" stroke-width="0.83"/></svg>
<svg class="a" style="left:199px;top:450px;" width="102" height="12"><rect x="0.00" y="0.20" width="101.40" height="11.70" rx="0" fill="#f5f5f5"/></svg>
<svg class="a" style="left:245.40px;top:453.40px;" width="9.40" height="4.40" viewBox="0 0 10 5"><path d="M0.3 0.3 L5 4.6 L9.7 0.3" fill="none" stroke="#cccccc" stroke-width="0.8"/></svg>
<svg class="a" style="left:306px;top:54px;" width="46" height="16"><rect x="0.63" y="1.22" width="44.95" height="14.05" rx="1.68" fill="#f5f5f5" stroke="#dedede" stroke-width="0.65"/></svg>
<svg class="a" style="left:309.70px;top:58.10px;" width="8.30" height="8.30" viewBox="0 0 20 20"><path d="M2.6 9.2 A7.4 7.4 0 0 1 15.4 4.8" fill="none" stroke="#2a2a2a" stroke-width="3.4"/><path d="M19.4 0.6 V8.8 H11.2 Z" fill="#2a2a2a"/><path d="M17.4 10.8 A7.4 7.4 0 0 1 4.6 15.2" fill="none" stroke="#2a2a2a" stroke-width="3.4"/><path d="M0.6 19.4 V11.2 H8.8 Z" fill="#2a2a2a"/></svg>
<div class="a t" style="top:57px;font-size:7.7px;line-height:12px;height:12px;color:#1a1a1a;left:322.30px;">Reload</div>
<svg class="a" style="left:358px;top:58px;" width="1" height="9"><rect x="0.20" y="0.00" width="0.70" height="8.60" rx="0" fill="#d8d8d8"/></svg>
<svg class="a" style="left:364px;top:54px;" width="56" height="16"><rect x="0.43" y="1.22" width="55.05" height="14.05" rx="1.68" fill="#f5f5f5" stroke="#dedede" stroke-width="0.65"/></svg>
<div class="a t" style="top:57px;font-size:7.7px;line-height:12px;height:12px;color:#1a1a1a;left:369.80px;">Create: OSD</div>
<svg class="a" style="left:425px;top:54px;" width="85" height="16"><rect x="0.63" y="1.22" width="83.45" height="14.05" rx="1.68" fill="#f5f5f5" stroke="#dedede" stroke-width="0.65"/></svg>
<div class="a t" style="top:57px;font-size:7.7px;line-height:12px;height:12px;color:#1a1a1a;left:430.90px;">Manage Global Flags</div>
<div class="a t" style="top:56px;font-size:8.32px;line-height:12px;height:12px;color:#2c3640;left:826.90px;">No OSD selected</div>
<svg class="a" style="left:899px;top:54px;" width="46" height="16"><rect x="0.93" y="1.22" width="44.35" height="14.05" rx="1.68" fill="#fafafa" stroke="#ececec" stroke-width="0.65"/></svg>
<svg class="a" style="left:903.00px;top:58.60px;" width="7.30" height="7.30" viewBox="0 0 20 20"><circle cx="10" cy="10" r="10" fill="#8f8f8f"/><rect x="8.4" y="3.4" width="3.4" height="3" fill="#fafafa"/><path d="M7 8.4 H11.8 V15 H13.4 V17 H6.8 V15 H8.4 V10.4 H7 Z" fill="#fafafa"/></svg>
<div class="a t" style="top:57px;font-size:7.7px;line-height:12px;height:12px;color:#9c9c9c;left:915.30px;">Details</div>
<svg class="a" style="left:950px;top:54px;" width="38" height="16"><rect x="0.62" y="1.22" width="36.55" height="14.05" rx="1.68" fill="#fafafa" stroke="#ececec" stroke-width="0.65"/></svg>
<svg class="a" style="left:953.60px;top:58.20px;" width="7.40" height="8.00" viewBox="0 0 19 20"><path d="M0.6 0.6 L18.4 10 L0.6 19.4 Z" fill="#9c9c9c"/></svg>
<div class="a t" style="top:57px;font-size:7.7px;line-height:12px;height:12px;color:#9c9c9c;left:966.00px;">Start</div>
<svg class="a" style="left:993px;top:54px;" width="38" height="16"><rect x="0.82" y="1.22" width="36.75" height="14.05" rx="1.68" fill="#fafafa" stroke="#ececec" stroke-width="0.65"/></svg>
<svg class="a" style="left:997.30px;top:58.40px;" width="7.70" height="7.70" viewBox="0 0 20 20"><rect x="0" y="0" width="20" height="20" rx="1" fill="#9c9c9c"/></svg>
<div class="a t" style="top:57px;font-size:7.7px;line-height:12px;height:12px;color:#9c9c9c;left:1009.60px;">Stop</div>
<svg class="a" style="left:1036px;top:54px;" width="48" height="16"><rect x="0.92" y="1.22" width="45.85" height="14.05" rx="1.68" fill="#fafafa" stroke="#ececec" stroke-width="0.65"/></svg>
<svg class="a" style="left:1040.00px;top:58.10px;" width="8.20" height="8.20" viewBox="0 0 20 20"><path d="M2.6 9.2 A7.4 7.4 0 0 1 15.4 4.8" fill="none" stroke="#9c9c9c" stroke-width="3.2"/><path d="M19.4 0.6 V8.8 H11.2 Z" fill="#9c9c9c"/><path d="M17.4 10.8 A7.4 7.4 0 0 1 4.6 15.2" fill="none" stroke="#9c9c9c" stroke-width="3.2"/><path d="M0.6 19.4 V11.2 H8.8 Z" fill="#9c9c9c"/></svg>
<div class="a t" style="top:57px;font-size:7.7px;line-height:12px;height:12px;color:#9c9c9c;left:1052.90px;">Restart</div>
<svg class="a" style="left:1088px;top:58px;" width="2" height="9"><rect x="0.40" y="0.00" width="0.70" height="8.60" rx="0" fill="#dcdcdc"/></svg>
<svg class="a" style="left:1094px;top:54px;" width="34" height="16"><rect x="0.73" y="1.22" width="32.75" height="14.05" rx="1.68" fill="#fafafa" stroke="#ececec" stroke-width="0.65"/></svg>
<svg class="a" style="left:1097.90px;top:58.20px;" width="8.00" height="8.00" viewBox="0 0 20 20"><circle cx="10" cy="10" r="8.4" fill="none" stroke="#9c9c9c" stroke-width="2.4"/></svg>
<div class="a t" style="top:57px;font-size:7.7px;line-height:12px;height:12px;color:#9c9c9c;left:1110.00px;">Out</div>
<svg class="a" style="left:1134px;top:54px;" width="28" height="16"><rect x="0.42" y="1.22" width="27.15" height="14.05" rx="1.68" fill="#fafafa" stroke="#ececec" stroke-width="0.65"/></svg>
<svg class="a" style="left:1137.80px;top:58.30px;" width="7.80" height="7.80" viewBox="0 0 20 20"><circle cx="10" cy="10" r="10" fill="#9c9c9c"/></svg>
<div class="a t" style="top:57px;font-size:7.7px;line-height:12px;height:12px;color:#9c9c9c;left:1150.00px;">In</div>
<svg class="a" style="left:1168px;top:58px;" width="1" height="9"><rect x="0.30" y="0.00" width="0.70" height="8.60" rx="0" fill="#dcdcdc"/></svg>
<svg class="a" style="left:1174px;top:54px;" width="49" height="16"><rect x="0.33" y="1.22" width="48.25" height="14.05" rx="1.68" fill="#fafafa" stroke="#ececec" stroke-width="0.65"/></svg>
<svg class="a" style="left:1177.50px;top:58.90px;" width="7.90" height="6.80" viewBox="0 0 20 17"><rect x="0" y="0.0" width="20" height="3" rx="0.6" fill="#9c9c9c"/><rect x="0" y="7.0" width="20" height="3" rx="0.6" fill="#9c9c9c"/><rect x="0" y="14.0" width="20" height="3" rx="0.6" fill="#9c9c9c"/></svg>
<div class="a t" style="top:57px;font-size:7.7px;line-height:12px;height:12px;color:#9c9c9c;left:1190.00px;">More</div>
<svg class="a" style="left:1212.30px;top:60.90px;" width="5.20" height="3.00" viewBox="0 0 10 6"><path d="M0.5 0.7 L5 5.2 L9.5 0.7" fill="none" stroke="#c8c8c8" stroke-width="1.35"/></svg>
<svg class="a" style="left:301px;top:73px;" width="929" height="2"><rect x="0.20" y="0.60" width="928.20" height="0.80" rx="0" fill="#d8d8d8"/></svg>
<svg class="a" style="left:396px;top:74px;" width="2" height="29"><rect x="0.60" y="0.40" width="0.80" height="28.20" rx="0" fill="#dcdcdc"/></svg>
<svg class="a" style="left:445px;top:74px;" width="1" height="29"><rect x="0.10" y="0.40" width="0.80" height="28.20" rx="0" fill="#dcdcdc"/></svg>
<svg class="a" style="left:509px;top:74px;" width="2" height="29"><rect x="0.20" y="0.40" width="0.80" height="28.20" rx="0" fill="#dcdcdc"/></svg>
<svg class="a" style="left:586px;top:74px;" width="1" height="29"><rect x="0.10" y="0.40" width="0.80" height="28.20" rx="0" fill="#dcdcdc"/></svg>
<svg class="a" style="left:650px;top:74px;" width="2" height="29"><rect x="0.50" y="0.40" width="0.80" height="28.20" rx="0" fill="#dcdcdc"/></svg>
<svg class="a" style="left:708px;top:74px;" width="1" height="29"><rect x="0.20" y="0.40" width="0.80" height="28.20" rx="0" fill="#dcdcdc"/></svg>
<svg class="a" style="left:765px;top:74px;" width="2" height="29"><rect x="0.60" y="0.40" width="0.80" height="28.20" rx="0" fill="#dcdcdc"/></svg>
<svg class="a" style="left:830px;top:74px;" width="1" height="29"><rect x="0.10" y="0.40" width="0.80" height="28.20" rx="0" fill="#dcdcdc"/></svg>
<svg class="a" style="left:894px;top:74px;" width="1" height="29"><rect x="0.20" y="0.40" width="0.80" height="28.20" rx="0" fill="#dcdcdc"/></svg>
<svg class="a" style="left:971px;top:74px;" width="1" height="29"><rect x="0.20" y="0.40" width="0.80" height="28.20" rx="0" fill="#dcdcdc"/></svg>
<svg class="a" style="left:1028px;top:74px;" width="2" height="29"><rect x="0.80" y="0.40" width="0.80" height="28.20" rx="0" fill="#dcdcdc"/></svg>
<svg class="a" style="left:301px;top:102px;" width="929" height="2"><rect x="0.20" y="0.40" width="928.20" height="0.80" rx="0" fill="#d8d8d8"/></svg>
<div class="a t" style="top:83px;font-size:8.32px;line-height:12px;height:12px;color:#6a6a6a;left:307.50px;">Name</div>
<div class="a t" style="top:83px;font-size:8.32px;line-height:12px;height:12px;color:#6a6a6a;right:803.50px;text-align:right;">Class</div>
<div class="a t" style="top:83px;font-size:8.32px;line-height:12px;height:12px;color:#6a6a6a;right:739.30px;text-align:right;">OSD Type</div>
<div class="a t" style="top:83px;font-size:8.32px;line-height:12px;height:12px;color:#6a6a6a;right:662.20px;text-align:right;">Status</div>
<div class="a t" style="top:83px;font-size:8.32px;line-height:12px;height:12px;color:#6a6a6a;right:598.00px;text-align:right;">Version</div>
<div class="a t" style="top:83px;font-size:8.32px;line-height:12px;height:12px;color:#6a6a6a;right:539.90px;text-align:right;">weight</div>
<div class="a t" style="top:83px;font-size:8.32px;line-height:12px;height:12px;color:#6a6a6a;right:482.60px;text-align:right;">reweight</div>
<div class="a t" style="top:83px;font-size:8.32px;line-height:12px;height:12px;color:#6a6a6a;right:418.20px;text-align:right;">Used (%)</div>
<div class="a t" style="top:83px;font-size:8.32px;line-height:12px;height:12px;color:#6a6a6a;right:354.10px;text-align:right;">Total</div>
<div class="a t" style="top:77px;font-size:8.32px;line-height:12px;height:12px;color:#6a6a6a;right:277.10px;text-align:right;">Apply/Commit</div>
<div class="a t" style="top:87px;font-size:8.32px;line-height:12px;height:12px;color:#6a6a6a;right:277.10px;text-align:right;">Latency (ms)</div>
<div class="a t" style="top:83px;font-size:8.32px;line-height:12px;height:12px;color:#6a6a6a;right:219.40px;text-align:right;">PGs</div>
<svg class="a" style="left:304.60px;top:109.70px;" width="4.60" height="3.00" viewBox="0 0 10 6"><path d="M0.5 0.7 L5 5.2 L9.5 0.7" fill="none" stroke="#a8a8a8" stroke-width="1.96"/></svg>
<svg class="a" style="left:311.00px;top:106.30px;" width="10.60" height="9.00" viewBox="0 0 20 16"><rect x="0" y="0.2" width="20" height="4.8" rx="1" fill="#3c3c3c"/><rect x="0.8" y="1.4" width="18.4" height="2.6" fill="#8a8a8a"/><rect x="14.5" y="1.7" width="3.6" height="1.9" fill="#1a1a1a"/><rect x="0" y="5.6000000000000005" width="20" height="4.8" rx="1" fill="#3c3c3c"/><rect x="0.8" y="6.800000000000001" width="18.4" height="2.6" fill="#8a8a8a"/><rect x="14.5" y="7.1000000000000005" width="3.6" height="1.9" fill="#1a1a1a"/><rect x="0" y="11.0" width="20" height="4.8" rx="1" fill="#3c3c3c"/><rect x="0.8" y="12.2" width="18.4" height="2.6" fill="#8a8a8a"/><rect x="14.5" y="12.5" width="3.6" height="1.9" fill="#1a1a1a"/></svg>
<div class="a t" style="top:105px;font-size:8.32px;line-height:12px;height:12px;color:#111;left:327.30px;">default</div>
<svg class="a" style="left:314.80px;top:125.04px;" width="4.80" height="3.00" viewBox="0 0 10 6"><path d="M0.5 0.7 L5 5.2 L9.5 0.7" fill="none" stroke="#a8a8a8" stroke-width="1.88"/></svg>
<svg class="a" style="left:322.00px;top:120.94px;" width="8.00" height="10.30" viewBox="0 0 16 20"><rect x="0" y="0" width="16" height="20" rx="1.2" fill="#3a3a3a"/><rect x="2.2" y="2" width="11.6" height="13" fill="#7a7a7a"/><rect x="5.5" y="16.2" width="5" height="2.6" fill="#e8e8e8"/></svg>
<div class="a t" style="top:120px;font-size:8.32px;line-height:12px;height:12px;color:#111;left:337.90px;">nodeq</div>
<svg class="a" style="left:332.20px;top:137.98px;" width="9.50" height="7.90" viewBox="0 0 20 16.4"><path d="M5 1 H15 L19 8.8 V14 A1.4 1.4 0 0 1 17.6 15.4 H2.4 A1.4 1.4 0 0 1 1 14 V8.8 Z" fill="none" stroke="#636363" stroke-width="2.2" stroke-linejoin="round"/><path d="M1.2 9.2 H18.8" stroke="#636363" stroke-width="2.2" fill="none"/><rect x="11.6" y="11.4" width="2" height="1.9" fill="#636363"/><rect x="14.8" y="11.4" width="2" height="1.9" fill="#636363"/></svg>
<div class="a t" style="top:136px;font-size:8.32px;line-height:12px;height:12px;color:#111;left:348.10px;">osd.2</div>
<div class="a t" style="top:136px;font-size:8.32px;line-height:12px;height:12px;color:#111;right:795.20px;text-align:right;">hdd</div>
<div class="a t" style="top:136px;font-size:8.32px;line-height:12px;height:12px;color:#111;right:731.10px;text-align:right;">bluestore</div>
<div class="a t" style="top:136px;font-size:8.32px;line-height:12px;height:12px;color:#111;left:538.80px;">up</div>
<svg class="a" style="left:550.00px;top:138.48px;" width="7.20" height="7.20" viewBox="0 0 20 20"><circle cx="10" cy="10" r="10" fill="#21bf4b"/><path d="M10 3.4 L16.2 9.8 H12.4 V15.6 H7.6 V9.8 H3.8 Z" fill="#fff"/></svg>
<div class="a t" style="top:136px;font-size:8.32px;line-height:12px;height:12px;color:#111;left:559.50px;">/ in</div>
<svg class="a" style="left:573.10px;top:138.48px;" width="7.20" height="7.20" viewBox="0 0 20 20"><circle cx="10" cy="10" r="10" fill="#21bf4b"/></svg>
<div class="a t" style="top:136px;font-size:8.32px;line-height:12px;height:12px;color:#111;right:589.80px;text-align:right;">19.2.3</div>
<div class="a t" style="top:136px;font-size:8.32px;line-height:12px;height:12px;color:#111;right:531.90px;text-align:right;">0.09769</div>
<div class="a t" style="top:136px;font-size:8.32px;line-height:12px;height:12px;color:#111;right:474.30px;text-align:right;">1.00</div>
<div class="a t" style="top:136px;font-size:8.32px;line-height:12px;height:12px;color:#111;right:410.20px;text-align:right;">2.28</div>
<div class="a t" style="top:136px;font-size:8.32px;line-height:12px;height:12px;color:#111;right:345.90px;text-align:right;">100.00 GiB</div>
<div class="a t" style="top:136px;font-size:8.32px;line-height:12px;height:12px;color:#111;right:268.80px;text-align:right;">0 / 0</div>
<div class="a t" style="top:136px;font-size:8.32px;line-height:12px;height:12px;color:#111;right:210.90px;text-align:right;">32</div>
<svg class="a" style="left:314.80px;top:155.72px;" width="4.80" height="3.00" viewBox="0 0 10 6"><path d="M0.5 0.7 L5 5.2 L9.5 0.7" fill="none" stroke="#a8a8a8" stroke-width="1.88"/></svg>
<svg class="a" style="left:322.00px;top:151.62px;" width="8.00" height="10.30" viewBox="0 0 16 20"><rect x="0" y="0" width="16" height="20" rx="1.2" fill="#3a3a3a"/><rect x="2.2" y="2" width="11.6" height="13" fill="#7a7a7a"/><rect x="5.5" y="16.2" width="5" height="2.6" fill="#e8e8e8"/></svg>
<div class="a t" style="top:151px;font-size:8.32px;line-height:12px;height:12px;color:#111;left:337.90px;">node2</div>
<div class="a t" style="top:151px;font-size:8.32px;line-height:12px;height:12px;color:#111;right:589.80px;text-align:right;">19.2.3</div>
<svg class="a" style="left:332.20px;top:168.66px;" width="9.50" height="7.90" viewBox="0 0 20 16.4"><path d="M5 1 H15 L19 8.8 V14 A1.4 1.4 0 0 1 17.6 15.4 H2.4 A1.4 1.4 0 0 1 1 14 V8.8 Z" fill="none" stroke="#636363" stroke-width="2.2" stroke-linejoin="round"/><path d="M1.2 9.2 H18.8" stroke="#636363" stroke-width="2.2" fill="none"/><rect x="11.6" y="11.4" width="2" height="1.9" fill="#636363"/><rect x="14.8" y="11.4" width="2" height="1.9" fill="#636363"/></svg>
<div class="a t" style="top:167px;font-size:8.32px;line-height:12px;height:12px;color:#111;left:348.10px;">osd.1</div>
<div class="a t" style="top:167px;font-size:8.32px;line-height:12px;height:12px;color:#111;right:795.20px;text-align:right;">hdd</div>
<div class="a t" style="top:167px;font-size:8.32px;line-height:12px;height:12px;color:#111;right:731.10px;text-align:right;">bluestore</div>
<div class="a t" style="top:167px;font-size:8.32px;line-height:12px;height:12px;color:#111;left:538.80px;">up</div>
<svg class="a" style="left:550.00px;top:169.16px;" width="7.20" height="7.20" viewBox="0 0 20 20"><circle cx="10" cy="10" r="10" fill="#21bf4b"/><path d="M10 3.4 L16.2 9.8 H12.4 V15.6 H7.6 V9.8 H3.8 Z" fill="#fff"/></svg>
<div class="a t" style="top:167px;font-size:8.32px;line-height:12px;height:12px;color:#111;left:559.50px;">/ in</div>
<svg class="a" style="left:573.10px;top:169.16px;" width="7.20" height="7.20" viewBox="0 0 20 20"><circle cx="10" cy="10" r="10" fill="#21bf4b"/></svg>
<div class="a t" style="top:167px;font-size:8.32px;line-height:12px;height:12px;color:#111;right:589.80px;text-align:right;">19.2.3</div>
<div class="a t" style="top:167px;font-size:8.32px;line-height:12px;height:12px;color:#111;right:531.90px;text-align:right;">0.09769</div>
<div class="a t" style="top:167px;font-size:8.32px;line-height:12px;height:12px;color:#111;right:474.30px;text-align:right;">1.00</div>
<div class="a t" style="top:167px;font-size:8.32px;line-height:12px;height:12px;color:#111;right:410.20px;text-align:right;">2.45</div>
<div class="a t" style="top:167px;font-size:8.32px;line-height:12px;height:12px;color:#111;right:345.90px;text-align:right;">100.00 GiB</div>
<div class="a t" style="top:167px;font-size:8.32px;line-height:12px;height:12px;color:#111;right:268.80px;text-align:right;">0 / 0</div>
<div class="a t" style="top:167px;font-size:8.32px;line-height:12px;height:12px;color:#111;right:210.90px;text-align:right;">32</div>
<svg class="a" style="left:314.80px;top:186.40px;" width="4.80" height="3.00" viewBox="0 0 10 6"><path d="M0.5 0.7 L5 5.2 L9.5 0.7" fill="none" stroke="#a8a8a8" stroke-width="1.88"/></svg>
<svg class="a" style="left:322.00px;top:182.30px;" width="8.00" height="10.30" viewBox="0 0 16 20"><rect x="0" y="0" width="16" height="20" rx="1.2" fill="#3a3a3a"/><rect x="2.2" y="2" width="11.6" height="13" fill="#7a7a7a"/><rect x="5.5" y="16.2" width="5" height="2.6" fill="#e8e8e8"/></svg>
<div class="a t" style="top:181px;font-size:8.32px;line-height:12px;height:12px;color:#111;left:337.90px;">node1</div>
<div class="a t" style="top:182px;font-size:8.32px;line-height:12px;height:12px;color:#111;right:589.80px;text-align:right;">19.2.3</div>
<svg class="a" style="left:332.20px;top:199.34px;" width="9.50" height="7.90" viewBox="0 0 20 16.4"><path d="M5 1 H15 L19 8.8 V14 A1.4 1.4 0 0 1 17.6 15.4 H2.4 A1.4 1.4 0 0 1 1 14 V8.8 Z" fill="none" stroke="#636363" stroke-width="2.2" stroke-linejoin="round"/><path d="M1.2 9.2 H18.8" stroke="#636363" stroke-width="2.2" fill="none"/><rect x="11.6" y="11.4" width="2" height="1.9" fill="#636363"/><rect x="14.8" y="11.4" width="2" height="1.9" fill="#636363"/></svg>
<div class="a t" style="top:197px;font-size:8.32px;line-height:12px;height:12px;color:#111;left:348.10px;">osd.0</div>
<div class="a t" style="top:197px;font-size:8.32px;line-height:12px;height:12px;color:#111;right:795.20px;text-align:right;">hdd</div>
<div class="a t" style="top:197px;font-size:8.32px;line-height:12px;height:12px;color:#111;right:731.10px;text-align:right;">bluestore</div>
<div class="a t" style="top:197px;font-size:8.32px;line-height:12px;height:12px;color:#111;left:538.80px;">up</div>
<svg class="a" style="left:550.00px;top:199.84px;" width="7.20" height="7.20" viewBox="0 0 20 20"><circle cx="10" cy="10" r="10" fill="#21bf4b"/><path d="M10 3.4 L16.2 9.8 H12.4 V15.6 H7.6 V9.8 H3.8 Z" fill="#fff"/></svg>
<div class="a t" style="top:197px;font-size:8.32px;line-height:12px;height:12px;color:#111;left:559.50px;">/ in</div>
<svg class="a" style="left:573.10px;top:199.84px;" width="7.20" height="7.20" viewBox="0 0 20 20"><circle cx="10" cy="10" r="10" fill="#21bf4b"/></svg>
<div class="a t" style="top:197px;font-size:8.32px;line-height:12px;height:12px;color:#111;right:589.80px;text-align:right;">19.2.3</div>
<div class="a t" style="top:197px;font-size:8.32px;line-height:12px;height:12px;color:#111;right:531.90px;text-align:right;">0.09769</div>
<div class="a t" style="top:197px;font-size:8.32px;line-height:12px;height:12px;color:#111;right:474.30px;text-align:right;">1.00</div>
<div class="a t" style="top:197px;font-size:8.32px;line-height:12px;height:12px;color:#111;right:410.20px;text-align:right;">2.45</div>
<div class="a t" style="top:197px;font-size:8.32px;line-height:12px;height:12px;color:#111;right:345.90px;text-align:right;">100.00 GiB</div>
<div class="a t" style="top:197px;font-size:8.32px;line-height:12px;height:12px;color:#111;right:268.80px;text-align:right;">0 / 0</div>
<div class="a t" style="top:197px;font-size:8.32px;line-height:12px;height:12px;color:#111;right:210.90px;text-align:right;">32</div>
<svg class="a" style="left:309px;top:115px;" width="720" height="36"><rect x="2.15" y="2.40" width="715.95" height="31.25" rx="0.00" fill="none" stroke="#ff0000" stroke-width="3.3"/></svg>
</div></body></html>
